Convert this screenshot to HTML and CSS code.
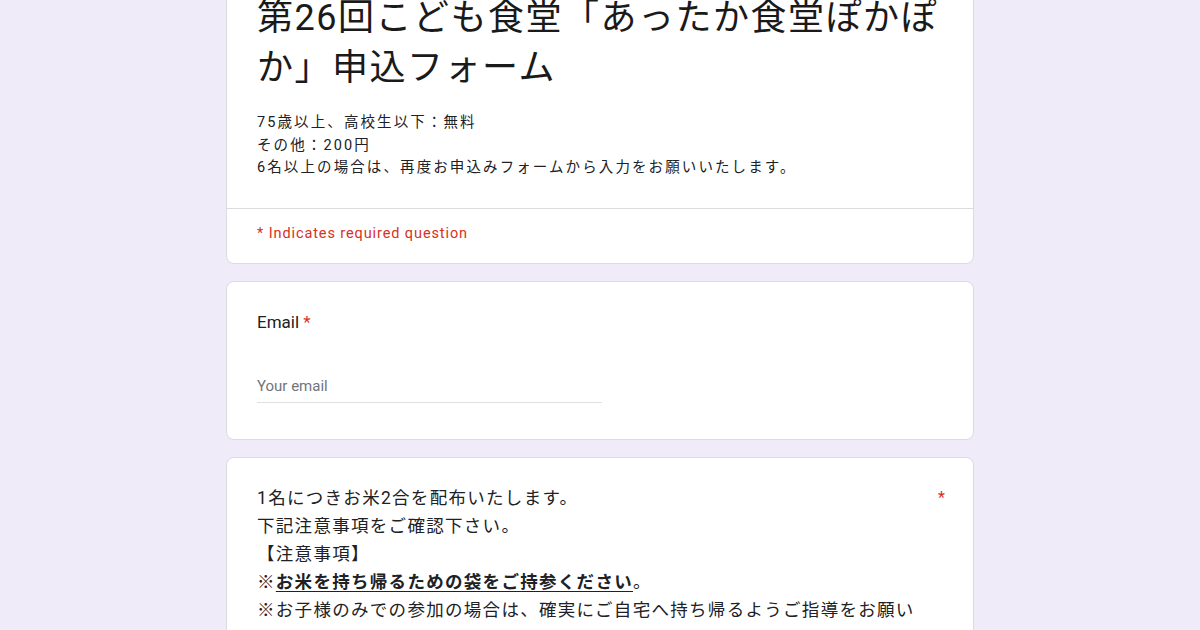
FILE: index.html
```html
<!DOCTYPE html>
<html lang="ja">
<head>
<meta charset="utf-8">
<title>第26回こども食堂「あったか食堂ぽかぽか」申込フォーム</title>
<link rel="stylesheet" href="styles.css">
</head>
<body>
<main class="form">
  <section class="card header-card">
    <div class="header-main">
      <h1 class="title">第26回こども食堂「あったか食堂ぽかぽか」申込フォーム</h1>
      <div class="desc">75歳以上、高校生以下：無料<br>その他：200円<br>6名以上の場合は、再度お申込みフォームから入力をお願いいたします。</div>
    </div>
    <div class="required-note">* Indicates required question</div>
  </section>

  <section class="card question">
    <div class="q-title">Email <span class="star">*</span></div>
    <div class="input">Your email</div>
  </section>

  <section class="card question notes">
    <div class="q-row">
      <div class="q-text">1名につきお米2合を配布いたします。<br>下記注意事項をご確認下さい。<br>【注意事項】<br>※<u>お米を持ち帰るための袋をご持参ください</u>。<br>※お子様のみでの参加の場合は、確実にご自宅へ持ち帰るようご指導をお願いいたします。</div>
      <span class="star">*</span>
    </div>
  </section>
</main>
</body>
</html>
```
FILE: styles.css
```css
html, body {
  margin: 0;
  padding: 0;
  height: 100%;
  overflow: hidden;
}
body {
  background: #f0ebf8;
  color: #202124;
  font-family: Roboto, "Noto Sans CJK JP", sans-serif;
}
.form {
  width: 748px;
  margin: -20px auto 0;
  display: flex;
  flex-direction: column;
  gap: 17px;
}
.card {
  background: #fff;
  border: 1px solid #dadce0;
  border-radius: 8px;
}
.header-main {
  padding: 12px 30px 28px;
  border-bottom: 1px solid #dadce0;
}
.title {
  margin: 0;
  font-weight: 400;
  font-size: 36px;
  line-height: 50px;
  letter-spacing: 1.5px;
  color: #1a1a1a;
}
.desc {
  margin-top: 19px;
  font-size: 14.5px;
  line-height: 22.5px;
  letter-spacing: 2.1px;
}
.required-note {
  padding: 15px 30px 19px;
  color: #d93025;
  font-size: 14.5px;
  line-height: 20px;
  letter-spacing: 0.9px;
}
.question {
  padding: 28px 30px 36px;
}
.q-title {
  font-size: 17px;
  line-height: 24px;
}
.star {
  color: #d93025;
}
.input {
  margin-top: 42px;
  width: 345px;
  padding-bottom: 6px;
  border-bottom: 1px solid #e0e0e0;
  color: #70757a;
  font-size: 15px;
  line-height: 20px;
}
.notes {
  padding-top: 26px;
}
.q-row {
  display: flex;
  gap: 20px;
}
.q-text {
  flex: 1;
  font-size: 17.5px;
  line-height: 28px;
  letter-spacing: 1.3px;
}
.q-row .star {
  font-size: 16px;
  line-height: 28px;
  margin-right: -2px;
}
u {
  font-weight: 700;
  text-underline-offset: 3px;
}
```
